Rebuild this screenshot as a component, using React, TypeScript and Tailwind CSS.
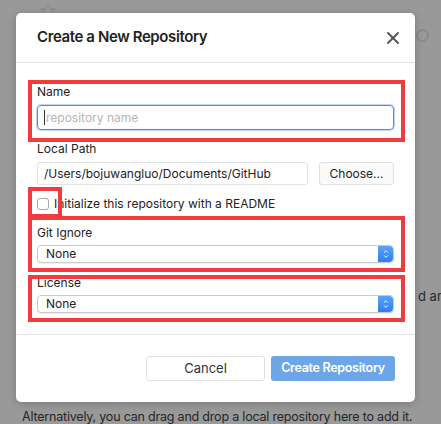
import { ChevronDown, ChevronUp, Star, X } from "lucide-react";

const font = { fontFamily: "Inter, 'Noto Sans', sans-serif" };

function Stepper() {
  return (
    <div className="flex h-full w-[15px] flex-col items-center justify-center rounded-r-[4px] bg-gradient-to-b from-[#5aa2fb] to-[#2c7ef0] text-white">
      <ChevronUp className="-mb-[2px] h-[7px] w-[8px]" strokeWidth={3} />
      <ChevronDown className="h-[7px] w-[8px]" strokeWidth={3} />
    </div>
  );
}

function Select() {
  return (
    <div className="flex h-[18px] items-center justify-between rounded-[4px] border border-[#c9c9c9] bg-white shadow-[0_1px_0_rgba(0,0,0,0.06)]">
      <span className="pl-[8px] text-[12px] leading-none text-[#222]">None</span>
      <Stepper />
    </div>
  );
}

export default function App() {
  return (
    <div className="relative h-[424px] w-[441px] overflow-hidden bg-[#999999]" style={font}>
      {/* background page, dimmed */}
      <Star className="absolute left-[40px] top-[3px] h-[16px] w-[16px] text-[#858585]" strokeWidth={1.5} />
      <div className="absolute left-[416px] top-[29px] h-[13px] w-[13px] rounded-full border-2 border-[#8a8a8a]" />
      <div className="absolute left-[418px] top-[287px] whitespace-nowrap text-[13px] text-[#2a2a2a]">d an</div>
      <div className="absolute left-[22px] top-[410px] whitespace-nowrap text-[12.5px] leading-[14px] tracking-[-0.2px] text-[#262626]">
        Alternatively, you can drag and drop a local repository here to add it.
      </div>

      {/* dialog */}
      <div className="absolute left-[16px] top-[13px] w-[399px] rounded-[5px] bg-white shadow-[0_2px_8px_rgba(0,0,0,0.2)]">
        <div className="flex h-[50px] items-center justify-between border-b border-[#e2e2e2] px-[21px]">
          <h1 className="text-[15px] font-semibold tracking-[-0.4px] text-[#222]">Create a New Repository</h1>
          <X className="-mr-[9px] h-[20px] w-[20px] text-[#555]" strokeWidth={2.3} />
        </div>

        <div className="flex flex-col px-[21px] pt-[22px] text-[12px] text-[#222]">
          <label className="leading-[14px]">Name</label>
          <div className="mt-[6px] flex h-[25px] items-center rounded-[4px] border border-[#4a8fe0] px-[6px] shadow-[0_0_0_1px_rgba(74,143,224,0.35)]">
            <span className="mr-[1px] h-[15px] w-px bg-[#333]" />
            <span className="text-[12px] text-[#b5b5b5]">repository name</span>
          </div>

          <label className="mt-[12px] leading-[14px]">Local Path</label>
          <div className="mt-[6px] flex h-[23px] gap-[11px]">
            <div className="flex flex-1 items-center rounded-[3px] border border-[#e3e3e3] px-[6px] text-[12px]">
              /Users/bojuwangluo/Documents/GitHub
            </div>
            <button className="w-[75px] rounded-[3px] border border-[#e0e0e0] bg-[#fafafa] text-[12px]">Choose…</button>
          </div>

          <div className="mt-[12px] flex h-[14px] items-center gap-[5px]">
            <span className="h-[12px] w-[12px] rounded-[3px] border border-[#a8a8a8] bg-white" />
            <span>Initialize this repository with a README</span>
          </div>

          <label className="mt-[15px] leading-[14px]">Git Ignore</label>
          <div className="mt-[5px]">
            <Select />
          </div>

          <label className="mt-[13px] leading-[14px]">License</label>
          <div className="mt-[5px]">
            <Select />
          </div>
        </div>

        <div className="mt-[21px] flex justify-end gap-[6px] border-t border-[#e2e2e2] px-[20px] pb-[21px] pt-[21px]">
          <button className="h-[25px] w-[119px] rounded-[3px] border border-[#e0e0e0] bg-white text-[13px] text-[#333]">Cancel</button>
          <button className="h-[25px] w-[124px] rounded-[3px] bg-[#6ca6e6] text-[12.5px] font-semibold tracking-[-0.3px] text-white">Create Repository</button>
        </div>

        {/* annotation boxes */}
        <div className="absolute left-[12px] top-[67px] h-[62px] w-[377px] border-[4px] border-[#f03c3c]" />
        <div className="absolute left-[12px] top-[174px] h-[31px] w-[34px] border-[4px] border-[#f03c3c]" />
        <div className="absolute left-[12px] top-[203px] h-[56px] w-[377px] border-[4px] border-[#f03c3c]" />
        <div className="absolute left-[12px] top-[262px] h-[47px] w-[377px] border-[4px] border-[#f03c3c]" />
      </div>
    </div>
  );
}
